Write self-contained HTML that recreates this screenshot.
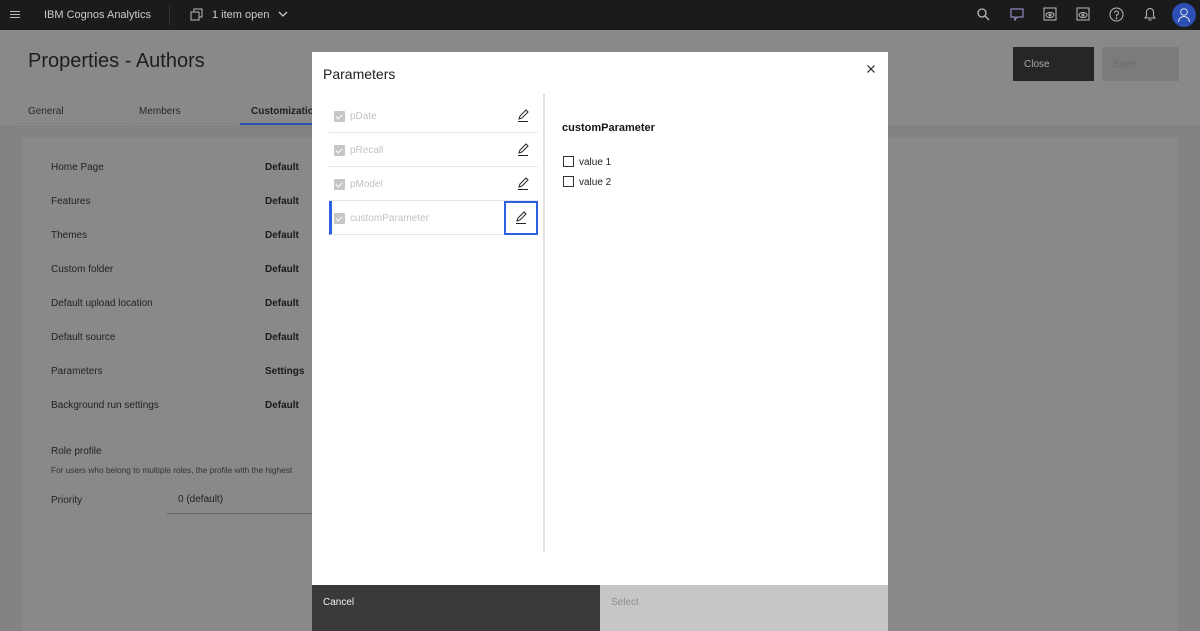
<!DOCTYPE html><html><head><style>
*{margin:0;padding:0;box-sizing:border-box}
body{width:1200px;height:631px;overflow:hidden;background:#898989;font-family:"Liberation Sans",sans-serif;position:relative;font-size:10px;color:#1e1e1e}
.a{position:absolute}
.top{left:0;top:0;width:1200px;height:30px;background:#1b1b1b;color:#ccc}
.row{left:51px;font-size:10px;color:#222}
.val{left:265px;font-weight:bold;font-size:10px;color:#1a1a1a}
.it{left:329px;width:209px;height:34px;border-bottom:1px solid #e6e6e6}
.cb{left:5px;top:12px;width:11px;height:11px;background:#c6c6c6;border-radius:1px}
.cb::after{content:"";position:absolute;left:3px;top:2px;width:3px;height:5px;border:solid #fff;border-width:0 1.5px 1.5px 0;transform:rotate(45deg)}
.lbl{left:21px;top:12px;color:#c2c2c2;font-size:10px}
.ed{right:6px;top:8px;width:18px;height:18px}
</style></head><body>
<div class="a top">
<div class="a" style="left:10px;top:11px;width:10px;height:1px;background:#bbb;box-shadow:0 3px #bbb,0 6px #bbb"></div>
<div class="a" style="left:44px;top:9px;font-size:11px">IBM Cognos Analytics</div>
<div class="a" style="left:169px;top:5px;width:1px;height:20px;background:#333"></div>
<svg class="a" style="left:190px;top:7px" width="14" height="14" viewBox="0 0 14 14" fill="none" stroke="#bbb"><rect x="1" y="5" width="8" height="8"/><path d="M4 5V2h8v8H9"/></svg>
<div class="a" style="left:212px;top:9px;font-size:11px">1 item open</div>
<svg class="a" style="left:278px;top:9px" width="10" height="10" viewBox="0 0 10 10" fill="none" stroke="#ccc" stroke-width="1.3"><path d="M1 3l4 4 4-4"/></svg>
<svg class="a" style="left:977px;top:8px" width="13" height="13" viewBox="0 0 13 13" fill="none" stroke="#bbb" stroke-width="1.3"><circle cx="5" cy="5" r="4"/><path d="M8 8l4 4"/></svg>
<svg class="a" style="left:1010px;top:7px" width="14" height="14" viewBox="0 0 14 14" fill="none" stroke="#a9a0e0"><path d="M1 2h12v8H7l-2 3v-3H1z"/></svg>
<svg class="a" style="left:1043px;top:7px" width="14" height="14" viewBox="0 0 14 14" fill="none" stroke="#bbb"><rect x="1" y="1" width="12" height="12"/><ellipse cx="7" cy="8" rx="4" ry="2.5"/><circle cx="7" cy="8" r="1"/></svg>
<svg class="a" style="left:1076px;top:7px" width="14" height="14" viewBox="0 0 14 14" fill="none" stroke="#bbb"><rect x="1" y="1" width="12" height="12"/><ellipse cx="7" cy="8" rx="4" ry="2.5"/><circle cx="7" cy="8" r="1"/></svg>
<svg class="a" style="left:1109px;top:7px" width="15" height="15" viewBox="0 0 15 15" fill="none" stroke="#bbb"><circle cx="7.5" cy="7.5" r="6.5"/><path d="M5.5 6a2 2 0 1 1 2 2v1.5"/><circle cx="7.5" cy="11.3" r=".4"/></svg>
<svg class="a" style="left:1143px;top:6px" width="14" height="16" viewBox="0 0 14 16" fill="none" stroke="#bbb"><path d="M2 12h10l-1.5-2V6a3.5 3.5 0 0 0-7 0v4z M5.5 14h3"/></svg>
<div class="a" style="left:1172px;top:3px;width:24px;height:24px;border-radius:50%;background:#2d4fb5"></div>
<svg class="a" style="left:1177px;top:7px" width="14" height="16" viewBox="0 0 14 16" fill="none" stroke="#dde"><circle cx="7" cy="5" r="3.3"/><path d="M1.5 15a5.5 5.5 0 0 1 11 0"/></svg>
</div>
<div class="a" style="left:28px;top:50px;font-size:20px;color:#1e1e1e">Properties - Authors</div>
<div class="a" style="left:1013px;top:47px;width:81px;height:34px;background:#262626;color:#aaa;padding:12px 11px;font-size:10px">Close</div>
<div class="a" style="left:1102px;top:47px;width:77px;height:34px;background:#7b7b7b;color:#6a6a6a;padding:12px 11px">Save</div>
<div class="a" style="left:28px;top:106px;color:#2a2a2a">General</div>
<div class="a" style="left:139px;top:106px;color:#2a2a2a">Members</div>
<div class="a" style="left:251px;top:106px;font-weight:bold">Customizatio</div>
<div class="a" style="left:16px;top:123px;width:112px;height:1px;background:#808080"></div>
<div class="a" style="left:129px;top:123px;width:110px;height:1px;background:#808080"></div>
<div class="a" style="left:240px;top:123px;width:72px;height:2px;background:#2d4fb5"></div>
<div class="a" style="left:0;top:125px;width:1200px;height:506px;background:#838383"></div>
<div class="a" style="left:22px;top:138px;width:1156px;height:493px;background:#898989"></div>
<div class="a row" style="top:162px">Home Page</div><div class="a val" style="top:162px">Default</div>
<div class="a row" style="top:196px">Features</div><div class="a val" style="top:196px">Default</div>
<div class="a row" style="top:230px">Themes</div><div class="a val" style="top:230px">Default</div>
<div class="a row" style="top:264px">Custom folder</div><div class="a val" style="top:264px">Default</div>
<div class="a row" style="top:298px">Default upload location</div><div class="a val" style="top:298px">Default</div>
<div class="a row" style="top:332px">Default source</div><div class="a val" style="top:332px">Default</div>
<div class="a row" style="top:366px">Parameters</div><div class="a val" style="top:366px">Settings</div>
<div class="a row" style="top:400px">Background run settings</div><div class="a val" style="top:400px">Default</div>
<div class="a row" style="top:446px">Role profile</div>
<div class="a row" style="top:465px;font-size:8.3px;color:#333;white-space:nowrap">For users who belong to multiple roles, the profile with the highest</div>
<div class="a row" style="top:495px">Priority</div>
<div class="a" style="left:178px;top:494px;color:#222">0 (default)</div>
<div class="a" style="left:167px;top:513px;width:145px;height:1px;background:#666"></div>

<div class="a" style="left:312px;top:52px;width:576px;height:579px;background:#fff">
<div class="a" style="left:11px;top:14px;font-size:14px;color:#1e1e1e">Parameters</div>
<svg class="a" style="left:554px;top:12px" width="10" height="10" viewBox="0 0 10 10" stroke="#222" stroke-width="1.2"><path d="M1.5 1.5l7 7M8.5 1.5l-7 7"/></svg>
<div class="a" style="left:231px;top:42px;width:2px;height:458px;background:#e2e2e2"></div>
<div class="a" style="left:250px;top:70px;font-size:11px;font-weight:bold;color:#161616">customParameter</div>
<div class="a" style="left:251px;top:104px;width:11px;height:11px;border:1px solid #333"></div>
<div class="a" style="left:267px;top:105px;color:#222">value 1</div>
<div class="a" style="left:251px;top:124px;width:11px;height:11px;border:1px solid #333"></div>
<div class="a" style="left:267px;top:125px;color:#222">value 2</div>
<div class="a" style="left:0;top:533px;width:288px;height:46px;background:#393939;color:#f0f0f0;padding:12px 11px">Cancel</div>
<div class="a" style="left:288px;top:533px;width:288px;height:46px;background:#c6c6c6;color:#8d8d8d;padding:12px 11px">Select</div>
</div>
<div class="a it" style="top:99px"><div class="a cb"></div><div class="a lbl">pDate</div><svg class="a ed" viewBox="0 0 18 18" fill="none" stroke="#222"><path d="M5 12l1-3 6-6 2 2-6 6-3 1zM4 14.5h10"/></svg></div>
<div class="a it" style="top:133px"><div class="a cb"></div><div class="a lbl">pRecall</div><svg class="a ed" viewBox="0 0 18 18" fill="none" stroke="#222"><path d="M5 12l1-3 6-6 2 2-6 6-3 1zM4 14.5h10"/></svg></div>
<div class="a it" style="top:167px"><div class="a cb"></div><div class="a lbl">pModel</div><svg class="a ed" viewBox="0 0 18 18" fill="none" stroke="#222"><path d="M5 12l1-3 6-6 2 2-6 6-3 1zM4 14.5h10"/></svg></div>
<div class="a it" style="top:201px;border-left:3px solid #2d5fe0"><div class="a cb" style="left:2px"></div><div class="a lbl" style="left:18px">customParameter</div><div class="a" style="right:0;top:0;width:34px;height:34px;border:2px solid #2d5fe0"></div><svg class="a ed" style="right:8px" viewBox="0 0 18 18" fill="none" stroke="#222"><path d="M5 12l1-3 6-6 2 2-6 6-3 1zM4 14.5h10"/></svg></div>
</body></html>
